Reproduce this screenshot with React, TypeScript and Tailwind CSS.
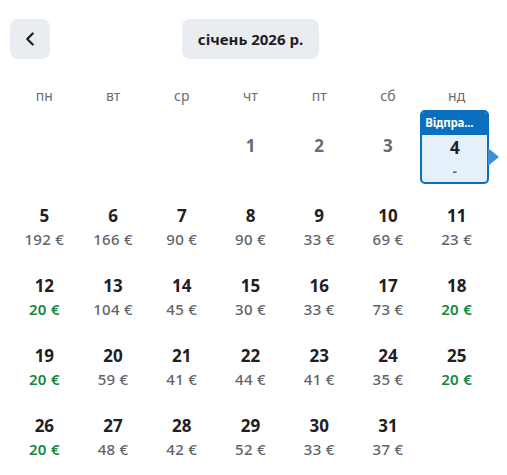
import React from "react";
import { ChevronLeft } from "lucide-react";

type Day = { day: number; price?: string; cheap?: boolean };

const weekdays = ["пн", "вт", "ср", "чт", "пт", "сб", "нд"];

const weeks: (Day | null)[][] = [
  [
    { day: 5, price: "192 €" },
    { day: 6, price: "166 €" },
    { day: 7, price: "90 €" },
    { day: 8, price: "90 €" },
    { day: 9, price: "33 €" },
    { day: 10, price: "69 €" },
    { day: 11, price: "23 €" },
  ],
  [
    { day: 12, price: "20 €", cheap: true },
    { day: 13, price: "104 €" },
    { day: 14, price: "45 €" },
    { day: 15, price: "30 €" },
    { day: 16, price: "33 €" },
    { day: 17, price: "73 €" },
    { day: 18, price: "20 €", cheap: true },
  ],
  [
    { day: 19, price: "20 €", cheap: true },
    { day: 20, price: "59 €" },
    { day: 21, price: "41 €" },
    { day: 22, price: "44 €" },
    { day: 23, price: "41 €" },
    { day: 24, price: "35 €" },
    { day: 25, price: "20 €", cheap: true },
  ],
  [
    { day: 26, price: "20 €", cheap: true },
    { day: 27, price: "48 €" },
    { day: 28, price: "42 €" },
    { day: 29, price: "52 €" },
    { day: 30, price: "33 €" },
    { day: 31, price: "37 €" },
    null,
  ],
];

const DayCell = ({ d }: { d: Day | null }) => {
  if (!d) return <div className="h-[70px]" />;
  return (
    <div className="h-[70px] flex flex-col items-center">
      <span className="text-[17px] leading-[22px] font-bold text-[#1e2023]">{d.day}</span>
      <span
        className={`text-[15px] leading-[24px] tracking-[0.3px] ${
          d.cheap ? "font-semibold text-[#14873a]" : "font-medium text-[#5f646b]"
        }`}
      >
        {d.price}
      </span>
    </div>
  );
};

export default function App() {
  return (
    <div
      className="w-[507px] h-[475px] bg-white pl-[10px] pr-[16px] overflow-hidden"
      style={{ fontFamily: "'Noto Sans', 'Open Sans', sans-serif" }}
    >
      <div className="flex items-center pt-[19px]">
        <button className="w-[40px] h-[40px] rounded-[8px] bg-[#e9edf1] flex items-center justify-center text-[#1e2023]">
          <ChevronLeft size={22} strokeWidth={2.5} />
        </button>
        <div className="flex-1 flex justify-center">
          <div className="h-[40px] px-[16px] rounded-[8px] bg-[#e9edf1] flex items-center text-[15px] font-bold text-[#1e2023]">
            січень 2026 р.
          </div>
        </div>
        <div className="w-[40px]" />
      </div>

      <div className="grid grid-cols-7 mt-[27px]">
        {weekdays.map((w) => (
          <div key={w} className="text-center text-[14px] leading-[20px] text-[#686d74]">
            {w}
          </div>
        ))}
      </div>

      <div className="grid grid-cols-7 mt-[29px]">
        <div className="h-[70px]" />
        <div className="h-[70px]" />
        <div className="h-[70px]" />
        {[1, 2, 3].map((n) => (
          <div key={n} className="h-[70px] flex flex-col items-center">
            <span className="text-[17px] leading-[22px] font-bold text-[#646c76]">{n}</span>
          </div>
        ))}
        <div className="h-[70px] relative">
          <div className="absolute left-[-2px] top-[-25px] w-[69px] h-[74px] rounded-[5px] border-2 border-[#0a6fbf] bg-[#e6f0fa] flex flex-col overflow-hidden">
            <div className="h-[23px] bg-[#0a6fbf] text-white text-[11.5px] font-bold leading-[22px] px-[3px] tracking-[-0.2px] whitespace-nowrap">
              Відпра...
            </div>
            <div className="flex flex-col items-center">
              <span className="text-[17px] leading-[26px] font-bold text-[#1e2023]">4</span>
              <span className="text-[14px] leading-[20px] font-semibold text-[#5d6268]">-</span>
            </div>
          </div>
          <svg
            className="absolute left-[66px] top-[13px]"
            width="12"
            height="18"
            viewBox="0 0 12 18"
          >
            <path d="M0 0 L11 9 L0 18 Z" fill="#3d8fdc" />
          </svg>
        </div>
        {weeks.flat().map((d, i) => (
          <DayCell key={i} d={d} />
        ))}
      </div>
    </div>
  );
}
